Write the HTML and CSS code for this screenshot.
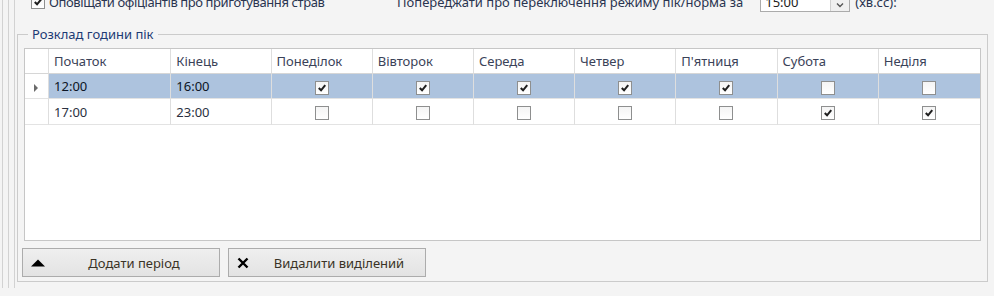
FILE: index.html
```html
<!DOCTYPE html>
<html lang="uk">
<head>
    <meta charset="UTF-8">
    <title>Розклад години пік</title>
    <link rel="stylesheet" href="styles.css">
</head>
<body>
    <div class="frame">
        <div class="frame-inner">
            <div class="panel">
                <div class="options">
                    <label class="opt">
                        <span class="check"><svg viewBox="0 0 13 13"><path d="M3 6.5 L5.5 9 L10 3.5"/></svg></span>
                        <span class="opt-text">Оповіщати офіціантів про приготування страв</span>
                    </label>
                    <div class="warn">
                        <span>Попереджати про переключення режиму пік/норма за</span>
                        <span class="spin">
                            <span class="spin-val">15:00</span>
                            <span class="spin-btn"><svg viewBox="0 0 8 6"><path d="M1 1.5 L4 4.5 L7 1.5"/></svg></span>
                        </span>
                        <span>(хв.сс):</span>
                    </div>
                </div>

                <fieldset class="group">
                    <legend>Розклад години пік</legend>

                    <div class="grid-box">
                        <table class="grid">
                            <colgroup>
                                <col class="c-ind">
                                <col class="c-start">
                                <col class="c-end">
                                <col class="c-day" span="7">
                            </colgroup>
                            <thead>
                                <tr>
                                    <th></th>
                                    <th>Початок</th>
                                    <th>Кінець</th>
                                    <th>Понеділок</th>
                                    <th>Вівторок</th>
                                    <th>Середа</th>
                                    <th>Четвер</th>
                                    <th>П'ятниця</th>
                                    <th>Субота</th>
                                    <th>Неділя</th>
                                </tr>
                            </thead>
                            <tbody id="rows"></tbody>
                        </table>
                    </div>

                    <div class="buttons">
                        <button class="btn">
                            <svg class="btn-icon" viewBox="0 0 14 8"><polygon points="0,7.5 7,0.5 14,7.5"/></svg>
                            <span class="btn-text">Додати період</span>
                        </button>
                        <button class="btn">
                            <svg class="btn-icon btn-x" viewBox="0 0 12 12"><path d="M1.5 1.5 L10.5 10.5 M10.5 1.5 L1.5 10.5"/></svg>
                            <span class="btn-text">Видалити виділений</span>
                        </button>
                    </div>
                </fieldset>
            </div>
        </div>
    </div>

    <script>
        // Schedule rows: start, end, Mon..Sun
        const periods = [
            { start: '12:00', end: '16:00', days: [1, 1, 1, 1, 1, 0, 0], selected: true },
            { start: '17:00', end: '23:00', days: [0, 0, 0, 0, 0, 1, 1] }
        ];

        const tick = '<svg viewBox="0 0 13 13"><path d="M3 6.5 L5.5 9 L10 3.5"/></svg>';
        const rows = document.getElementById('rows');

        periods.forEach(function(p) {
            const tr = document.createElement('tr');
            if (p.selected) tr.className = 'selected';

            let html = '<td class="ind">' + (p.selected ? '<span class="arrow"></span>' : '') + '</td>';
            html += '<td>' + p.start + '</td><td>' + p.end + '</td>';
            p.days.forEach(function(d) {
                html += '<td class="cb"><span class="check">' + (d ? tick : '') + '</span></td>';
            });
            tr.innerHTML = html;
            rows.appendChild(tr);
        });
    </script>
</body>
</html>
```

FILE: styles.css
```css
* {
    margin: 0;
    padding: 0;
    box-sizing: border-box;
}

html, body {
    height: 100%;
    overflow: hidden;
}

body {
    font-family: 'Noto Sans', 'Open Sans', sans-serif;
    font-size: 13px;
    background-color: #f4f4f4;
    color: #2a3550;
}

/* nested container edges on the left */
.frame {
    height: 100%;
    margin-left: 2px;
    border-left: 1px solid #d2d2d2;
    padding-left: 5px;
}

.frame-inner {
    height: 100%;
    border-left: 1px solid #d2d2d2;
    padding-left: 5px;
}

.panel {
    height: 100%;
    border-left: 1px solid #d2d2d2;
    padding-left: 2px;
}

/* top options row (partly scrolled out) */
.options {
    display: flex;
    align-items: center;
    height: 20px;
    margin-top: -8px;
    margin-bottom: 14px;
}

.opt {
    display: flex;
    align-items: center;
    gap: 4px;
    padding-left: 14px;
    width: 380px;
}

.opt-text {
    letter-spacing: -0.4px;
}

.warn {
    display: flex;
    align-items: center;
    gap: 5px;
}

.spin {
    display: flex;
    width: 90px;
    height: 20px;
    margin-left: 12px;
    border: 1px solid #ababab;
    background-color: #fff;
}

.spin-val {
    flex: 1;
    padding-left: 4px;
    line-height: 18px;
    color: #222;
}

.spin-btn {
    width: 19px;
    border-left: 1px solid #d0d0d0;
    background-color: #f0f0f0;
    display: flex;
    align-items: flex-end;
    justify-content: center;
    padding-bottom: 3px;
}

.spin-btn svg {
    width: 8px;
    height: 6px;
    fill: none;
    stroke: #555;
    stroke-width: 1.4;
}

/* checkbox */
.check {
    display: inline-block;
    width: 14px;
    height: 14px;
    border: 1px solid #8e8f8f;
    background: linear-gradient(#f4f4f4, #ffffff);
    vertical-align: middle;
}

.check svg {
    display: block;
    width: 12px;
    height: 12px;
    fill: none;
    stroke: #1e1e1e;
    stroke-width: 2.2;
}

/* group box */
.group {
    width: 971px;
    height: 256px;
    border: 1px solid #cbcbcb;
    padding: 6px 6px 0;
}

.group legend {
    margin-left: 4px;
    padding: 0 4px;
    line-height: 16px;
    color: #1d3b74;
}

.grid-box {
    height: 193px;
    border: 1px solid #c6c6c6;
    background-color: #fff;
}

.grid {
    width: 100%;
    table-layout: fixed;
    border-collapse: separate;
    border-spacing: 0;
}

.c-ind { width: 24px; }
.c-start { width: 122px; }
.c-end { width: 100px; }
.c-day { width: 101px; }

.grid th,
.grid td {
    height: 25px;
    padding: 0 5px;
    border-right: 1px solid #dedede;
    border-bottom: 1px solid #e3e3e3;
    text-align: left;
    font-weight: normal;
    white-space: nowrap;
    overflow: hidden;
}

.grid th {
    height: 25px;
    color: #3a4258;
    border-bottom-color: #d6d6d6;
}

.grid th:last-child,
.grid td:last-child {
    border-right: none;
}

.grid td {
    height: 25px;
    color: #2a3040;
}

.grid tbody tr:last-child td {
    height: 26px;
}

.grid tr.selected td {
    background-color: #adc3de;
    color: #0c1424;
}

.grid tr.selected td.ind {
    background-color: #fff;
}

.grid td.cb {
    text-align: center;
    padding: 0;
}

.arrow {
    display: inline-block;
    width: 0;
    height: 0;
    margin-left: 4px;
    border-top: 4px solid transparent;
    border-bottom: 4px solid transparent;
    border-left: 4px solid #6b6b6b;
    vertical-align: middle;
}

/* bottom buttons */
.buttons {
    display: flex;
    gap: 8px;
    margin-top: 7px;
    margin-left: -2px;
}

.btn {
    display: flex;
    align-items: center;
    width: 198px;
    height: 29px;
    padding-left: 8px;
    border: 1px solid #acacac;
    background: linear-gradient(#efefef, #e3e3e3);
    font-family: inherit;
    font-size: 13px;
    color: #3a3326;
    cursor: pointer;
}

.btn-icon {
    width: 14px;
    height: 8px;
    fill: #000;
}

.btn-x {
    width: 12px;
    height: 12px;
    fill: none;
    stroke: #000;
    stroke-width: 2.4;
}

.btn-text {
    flex: 1;
    text-align: center;
    padding-left: 4px;
}
```
